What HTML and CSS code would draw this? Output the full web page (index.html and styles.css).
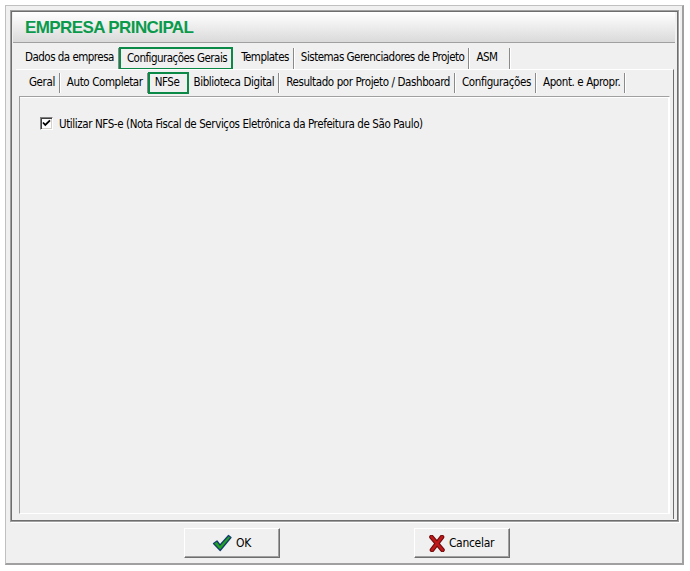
FILE: index.html
```html
<!DOCTYPE html>
<html lang="pt-BR">
<head>
<meta charset="utf-8">
<title>Empresa Principal</title>
<link rel="stylesheet" href="styles.css">
</head>
<body>
<div class="window">
  <div class="frame">
    <div class="title">EMPRESA PRINCIPAL</div>
    <div class="tabs tabs1">
      <span class="tab">Dados da empresa</span>
      <span class="tab sel">Configurações Gerais</span>
      <span class="tab">Templates</span>
      <span class="tab">Sistemas Gerenciadores de Projeto</span>
      <span class="tab t-asm">ASM</span>
    </div>
    <div class="page1">
      <div class="tabs tabs2">
        <span class="tab">Geral</span>
        <span class="tab">Auto Completar</span>
        <span class="tab sel">NFSe</span>
        <span class="tab">Biblioteca Digital</span>
        <span class="tab">Resultado por Projeto / Dashboard</span>
        <span class="tab">Configurações</span>
        <span class="tab">Apont. e Apropr.</span>
      </div>
      <div class="page2">
        <label class="check">
          <span class="box"><svg width="11" height="11" viewBox="0 0 11 11"><path d="M2 4.5 L4.3 7 L9 2.3" fill="none" stroke="#000" stroke-width="1.8"/></svg></span>
          <span>Utilizar NFS-e (Nota Fiscal de Serviços Eletrônica da Prefeitura de São Paulo)</span>
        </label>
      </div>
    </div>
  </div>
  <div class="buttons">
    <button class="btn"><svg class="ico" width="20" height="18" viewBox="0 0 20 18"><path d="M1.5 9.5 L5 7 L8 11 L16.5 1.5 L19 3.5 L8.2 16.5 Z" fill="#22a322" stroke="#123c6e" stroke-width="1.3" stroke-linejoin="round"/></svg>OK</button>
    <button class="btn"><svg class="ico" width="16" height="17" viewBox="0 0 16 17"><path d="M2.5 2 L13.5 15 M13 2 L3 15" stroke="#6e0c0c" stroke-width="4.6" stroke-linecap="round"/><path d="M2.5 2 L13.5 15 M13 2 L3 15" stroke="#c01818" stroke-width="2.6" stroke-linecap="round"/></svg>Cancelar</button>
  </div>
</div>
</body>
</html>
```
FILE: styles.css
```css
html, body {
  margin: 0;
  padding: 0;
  background: #ffffff;
}
body {
  font-family: "DejaVu Sans Condensed", "Liberation Sans", Arial, sans-serif;
  font-size: 11.5px;
  letter-spacing: -0.4px;
  color: #000;
}
.window {
  box-sizing: border-box;
  margin: 5px 0 0 5px;
  width: 679px;
  height: 560px;
  background: #f0f0f0;
  border-left: 1px solid #c0c0c0;
  border-top: 1px solid #c0c0c0;
  border-right: 2px solid #a0a0a0;
  border-bottom: 2px solid #a0a0a0;
  padding: 4px 3px 0 4px;
  display: flex;
  flex-direction: column;
}
.frame {
  box-sizing: border-box;
  height: 512px;
  border: 1px solid #a0a0a0;
  box-shadow: inset 1px 1px 0 #6e6e6e, inset -1px -1px 0 #6e6e6e, 1px 1px 0 #ffffff;
  padding: 1px 3px 2px 2px;
  display: flex;
  flex-direction: column;
}
.title {
  height: 30px;
  flex: none;
  background: linear-gradient(#ffffff, #dadada);
  border-bottom: 1px solid #a0a0a0;
  padding-left: 12px;
  font-family: "Liberation Sans", Arial, sans-serif;
  font-weight: bold;
  font-size: 17px;
  letter-spacing: -0.6px;
  color: #0b9a4c;
  line-height: 32px;
}
.tabs {
  display: flex;
  align-items: flex-start;
  flex: none;
  box-sizing: border-box;
}
.tabs1 {
  height: 26px;
  padding: 4px 0 0 6px;
  letter-spacing: -0.52px;
}
.tabs2 {
  height: 26px;
  padding: 2px 0 0 4px;
}
.tab {
  box-sizing: border-box;
  height: 21px;
  margin-top: 1px;
  line-height: 19px;
  padding: 0 4px 0 6px;
  white-space: nowrap;
  border-right: 1px solid #8a8a8a;
  box-shadow: 1px 0 0 #ffffff;
  margin-right: 1px;
}
.tabs2 .tab {
  height: 20px;
}
.tab.sel {
  height: 23px;
  margin-top: 0;
  margin-left: -1px;
  border: 2px solid #0b8a47;
  line-height: 18px;
  padding: 0 4px 0 6px;
  box-shadow: none;
  margin-right: 2px;
}
.tabs2 .tab.sel {
  height: 22px;
  line-height: 17px;
  padding: 0 8px 0 5px;
  margin-right: 1px;
}
.tabs2 .tab.sel + .tab {
  padding-left: 3px;
}
.t-asm { padding-right: 12px; }
.page1 {
  flex: 1;
  margin-left: 3px;
  margin-right: 1px;
  border-top: 1px solid #ffffff;
  border-right: 1px solid #6e6e6e;
  display: flex;
  flex-direction: column;
  padding: 0 3px 5px 3px;
}
.page2 {
  flex: 1;
  border-top: 1px solid #a0a0a0;
  border-left: 1px solid #a0a0a0;
  border-bottom: 1px solid #ffffff;
  border-right: 1px solid #ffffff;
  box-shadow: inset -1px 0 0 #ffffff, inset 0 1px 0 #ffffff;
  padding: 20px 0 0 20px;
}
.check {
  display: flex;
  align-items: center;
  gap: 6px;
  height: 13px;
}
.box {
  box-sizing: border-box;
  width: 13px;
  height: 13px;
  background: #fff;
  border-top: 1px solid #808080;
  border-left: 1px solid #808080;
  border-right: 1px solid #ffffff;
  border-bottom: 1px solid #ffffff;
  box-shadow: inset 1px 1px 0 #404040, inset -1px -1px 0 #d4d0c8;
  display: flex;
}
.buttons {
  flex: 1;
  display: flex;
  justify-content: center;
  align-items: flex-start;
  gap: 134px;
  padding-top: 6px;
  padding-left: 4px;
}
.btn {
  box-sizing: border-box;
  width: 96px;
  height: 30px;
  background: #f0f0f0;
  border: none;
  border-top: 1px solid #ffffff;
  border-left: 1px solid #ffffff;
  border-right: 1px solid #6e6e6e;
  border-bottom: 1px solid #6e6e6e;
  box-shadow: inset -1px -1px 0 #a0a0a0;
  font-family: inherit;
  font-size: 12px;
  letter-spacing: -0.3px;
  display: flex;
  align-items: center;
  justify-content: center;
  gap: 4px;
  padding: 0;
  color: #000;
}
.ico { flex: none; }
```
